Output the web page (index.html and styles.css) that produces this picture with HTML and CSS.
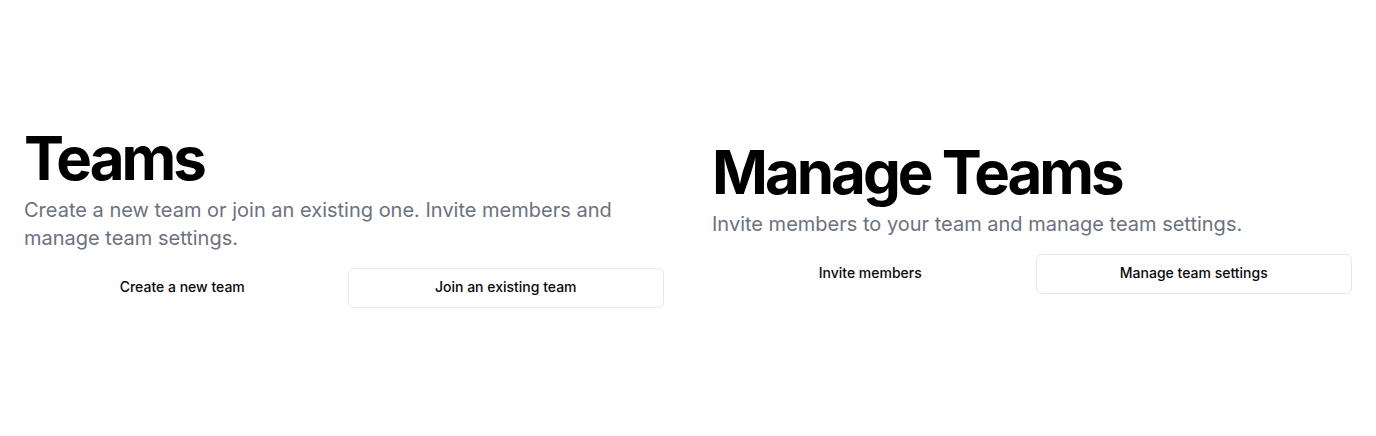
FILE: index.html
```html
<!DOCTYPE html>
<html lang="en">
<head>
<meta charset="utf-8">
<title>Teams</title>
<link rel="stylesheet" href="styles.css">
</head>
<body>
<main class="page">
  <section class="panel">
    <h1 class="title">Teams</h1>
    <p class="subtitle">Create a new team or join an existing one. Invite members and manage team settings.</p>
    <div class="actions">
      <button class="btn btn-ghost">Create a new team</button>
      <button class="btn btn-outline">Join an existing team</button>
    </div>
  </section>
  <section class="panel">
    <h1 class="title">Manage Teams</h1>
    <p class="subtitle">Invite members to your team and manage team settings.</p>
    <div class="actions">
      <button class="btn btn-ghost">Invite members</button>
      <button class="btn btn-outline">Manage team settings</button>
    </div>
  </section>
</main>
</body>
</html>
```

FILE: styles.css
```css
* { box-sizing: border-box; }
html, body { margin: 0; padding: 0; background: #ffffff; }
body { font-family: Inter, "Noto Sans", sans-serif; color: #09090b; }
.page {
  min-height: 436px;
  display: grid;
  grid-template-columns: 1fr 1fr;
  column-gap: 48px;
  padding: 0 24px;
  align-items: center;
}
.panel {
  display: flex;
  flex-direction: column;
}
.title {
  margin: 0;
  font-size: 60px;
  line-height: 1;
  font-weight: 700;
  letter-spacing: -0.05em;
  color: #000;
}
.subtitle {
  margin: 8px 0 0;
  font-size: 20px;
  line-height: 28px;
  color: #6b7280;
}
.actions {
  margin-top: 16px;
  display: grid;
  grid-template-columns: 1fr 1fr;
  gap: 7px;
}
.btn {
  height: 40px;
  padding: 0 16px 2px;
  font-family: inherit;
  font-size: 14px;
  line-height: 20px;
  font-weight: 500;
  color: #09090b;
  border-radius: 6px;
  background: #fff;
  cursor: pointer;
}
.btn-ghost { border: 1px solid transparent; }
.btn-outline { border: 1px solid #e5e7eb; }
```
